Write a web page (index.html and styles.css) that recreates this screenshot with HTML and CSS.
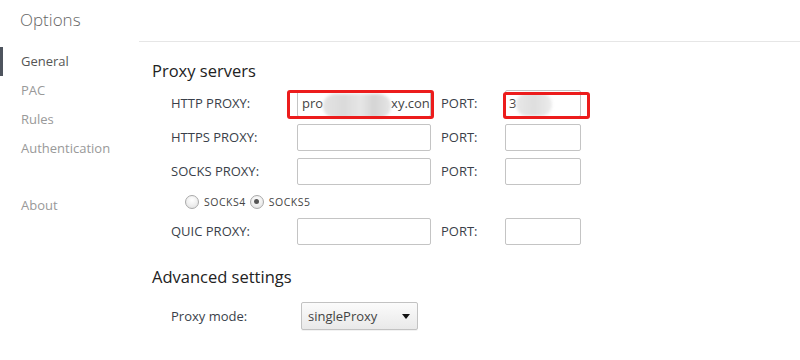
FILE: index.html
```html
<!DOCTYPE html>
<html>
<head>
<meta charset="utf-8">
<link rel="stylesheet" href="styles.css">
</head>
<body>
<div class="app">
  <aside class="sidebar">
    <div class="brand">Options</div>
    <nav class="nav">
      <div class="nav-item active">General</div>
      <div class="nav-item">PAC</div>
      <div class="nav-item">Rules</div>
      <div class="nav-item">Authentication</div>
      <div class="nav-item about">About</div>
    </nav>
  </aside>
  <main class="main">
    <div class="topbar"></div>
    <section class="section">
      <h2 class="heading">Proxy servers</h2>
      <div class="grid">
        <div class="label">HTTP PROXY:</div>
        <div class="field host">
          <span>pro</span><span class="hidden-part w68"></span><span>xy.con</span>
          <span class="mask mask-host"></span>
          <span class="mark mark-host"></span>
        </div>
        <div class="label port-label">PORT:</div>
        <div class="field port">
          <span>3</span>
          <span class="mask mask-port"></span>
          <span class="mark mark-port"></span>
        </div>

        <div class="label">HTTPS PROXY:</div>
        <div class="field host"></div>
        <div class="label port-label">PORT:</div>
        <div class="field port"></div>

        <div class="label">SOCKS PROXY:</div>
        <div class="field host"></div>
        <div class="label port-label">PORT:</div>
        <div class="field port"></div>

        <div class="radios">
          <span class="radio"></span><span class="radio-text">SOCKS4</span>
          <span class="radio checked"></span><span class="radio-text">SOCKS5</span>
        </div>

        <div class="label">QUIC PROXY:</div>
        <div class="field host"></div>
        <div class="label port-label">PORT:</div>
        <div class="field port"></div>
      </div>
    </section>
    <section class="section advanced">
      <h2 class="heading">Advanced settings</h2>
      <div class="mode-row">
        <div class="label">Proxy mode:</div>
        <div class="select"><span>singleProxy</span><span class="caret"></span></div>
      </div>
    </section>
  </main>
</div>
</body>
</html>
```

FILE: styles.css
```css
html, body {
  margin: 0;
  padding: 0;
  background: #ffffff;
}
body {
  font-family: "Open Sans", "Noto Sans", "Liberation Sans", sans-serif;
  font-size: 13px;
  color: #333;
}
.app {
  display: flex;
  width: 800px;
  height: 360px;
}
.sidebar {
  width: 139px;
  flex: none;
}
.brand {
  height: 41px;
  padding-left: 20px;
  font-size: 17px;
  line-height: 40px;
  color: #666;
  font-weight: 300;
}
.nav {
  margin-top: 6px;
  display: flex;
  flex-direction: column;
}
.nav-item {
  height: 29px;
  line-height: 29px;
  color: #999;
  border-left: 3px solid transparent;
  padding-left: 18px;
}
.nav-item.active {
  color: #555;
  border-left-color: #4e545e;
}
.nav-item.about {
  margin-top: 28px;
}
.main {
  flex: 1;
  display: flex;
  flex-direction: column;
}
.topbar {
  height: 42px;
  border-bottom: 1px solid #e6e6e6;
  box-sizing: border-box;
}
.section {
  padding-left: 13px;
}
.heading {
  margin: 0;
  font-weight: normal;
  font-size: 16.5px;
  color: #222;
  height: 22px;
  line-height: 22px;
  margin-top: 18px;
}
.grid {
  display: grid;
  grid-template-columns: 126px 134px 10px 64px 76px;
  grid-template-rows: 27px 27px 27px 19px 27px;
  row-gap: 7px;
  margin-top: 8px;
  padding-left: 19px;
}
.label {
  line-height: 27px;
  color: #3a3f4a;
}
.port-label {
  grid-column: 4;
}
.field {
  position: relative;
  border: 1px solid #c4c4c4;
  border-radius: 2px;
  box-sizing: border-box;
  padding-left: 4px;
  line-height: 25px;
  color: #444;
  white-space: nowrap;
  background: #fff;
}
.field.host { grid-column: 2; }
.field.port { grid-column: 5; padding-left: 3px; }
.hidden-part { display: inline-block; }
.w68 { width: 68px; }
.mask {
  position: absolute;
  border-radius: 12px;
  filter: blur(1.5px);
}
.mask-host {
  left: 25px;
  top: 3px;
  width: 68px;
  height: 24px;
  background: linear-gradient(90deg, #e4e4e4 0%, #dadada 30%, #e6e6e6 55%, #d4d4d4 75%, #e6e6e6 100%);
}
.mask-port {
  left: 10px;
  top: 2px;
  width: 36px;
  height: 23px;
  background: linear-gradient(90deg, #e8e8e8 0%, #dedede 50%, #ececec 100%);
}
.mark {
  position: absolute;
  border: 3px solid #ec1c1c;
  border-radius: 3px;
  box-sizing: border-box;
}
.mark-host {
  left: -11px;
  top: -1px;
  width: 147px;
  height: 29px;
}
.mark-port {
  left: -3px;
  top: 1px;
  width: 87px;
  height: 27px;
}
.radios {
  grid-column: 1 / span 5;
  display: flex;
  align-items: center;
  padding-left: 14px;
  height: 19px;
}
.radio {
  width: 14px;
  height: 14px;
  border-radius: 50%;
  box-sizing: border-box;
  border: 1px solid #a9a9a9;
  background: radial-gradient(circle at 50% 35%, #ffffff 0%, #f0f0f0 50%, #dcdcdc 100%);
  position: relative;
  flex: none;
}
.radio.checked::after {
  content: "";
  position: absolute;
  left: 3.5px;
  top: 3.5px;
  width: 5px;
  height: 5px;
  border-radius: 50%;
  background: #555;
}
.radio-text {
  font-size: 10.5px;
  color: #444;
  margin: 0 4px 0 5px;
  letter-spacing: 0.5px;
}
.advanced .heading {
  margin-top: 21px;
}
.mode-row {
  display: flex;
  align-items: center;
  padding-left: 19px;
  margin-top: 14px;
}
.mode-row .label {
  width: 130px;
}
.select {
  width: 117px;
  height: 28px;
  box-sizing: border-box;
  border: 1px solid #c2c2c2;
  border-radius: 2px;
  background: linear-gradient(#fbfbfb, #e9e9e9);
  display: flex;
  align-items: center;
  justify-content: space-between;
  padding: 0 7px 0 6px;
  color: #444;
  box-shadow: 0 1px 0 rgba(0,0,0,0.05);
}
.caret {
  width: 0;
  height: 0;
  border-left: 4px solid transparent;
  border-right: 4px solid transparent;
  border-top: 5px solid #111;
}
```
